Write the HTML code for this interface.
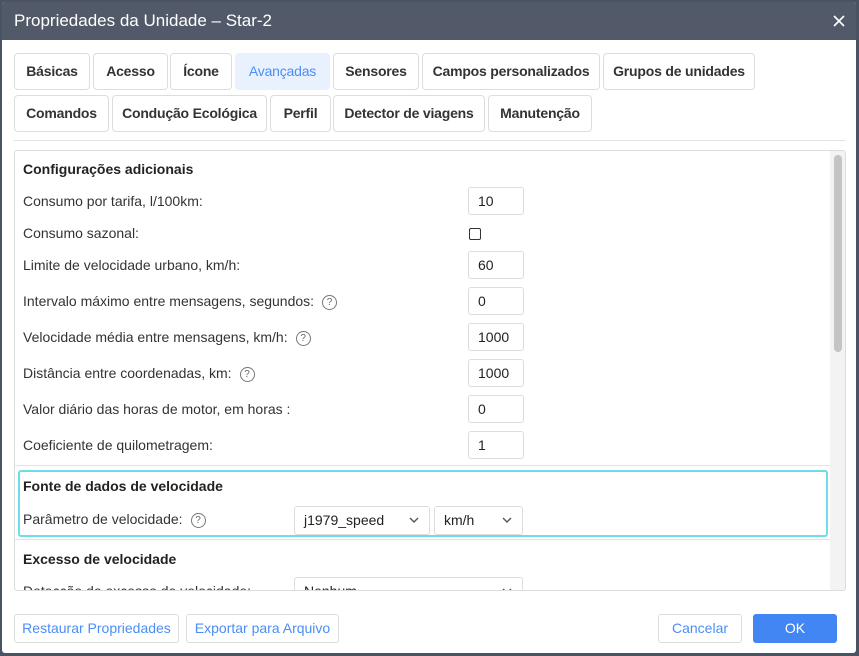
<!DOCTYPE html>
<html><head><meta charset="utf-8"><style>
*{box-sizing:border-box;margin:0;padding:0}
body{width:859px;height:656px;background:#4a5364;font-family:"Liberation Sans",sans-serif;position:relative;overflow:hidden;color:#222}
.win{position:absolute;left:2px;top:2px;width:854px;height:651px;background:#fff;border-radius:3px;overflow:hidden}
.title{position:absolute;left:0;top:0;width:100%;height:38px;background:#525a69;color:#fff;font-size:17px;line-height:38px;padding-left:12px}
.x{position:absolute;right:10px;top:12px;width:14px;height:14px}
.tab{position:absolute;height:37px;border:1px solid #ddd;border-radius:4px;font-size:14px;font-weight:bold;color:#333;line-height:35px;text-align:center;background:#fff;letter-spacing:-0.2px}
.tab.on{background:#e9f1fe;border-color:#e9f1fe;color:#4b8ef5;font-weight:normal}
.abs{position:absolute}
.lbl{position:absolute;left:8px;font-size:14px;color:#333}
.hd{position:absolute;left:8px;font-size:14px;font-weight:bold;color:#222}
.inp{position:absolute;left:453px;width:56px;height:28px;border:1px solid #ddd;border-radius:3px;font-size:14px;line-height:26px;padding-left:9px;color:#222}
.q{display:inline-block;width:15px;height:15px;border:1px solid #777;border-radius:50%;font-size:10px;line-height:13px;text-align:center;color:#666;margin-left:8px;vertical-align:1px}
.sel{position:absolute;height:29px;border:1px solid #ddd;border-radius:3px;font-size:14px;line-height:27px;padding-left:9px;color:#222;background:#fff}
.sel svg{position:absolute;right:10px;top:10px}
.btn{position:absolute;top:612px;height:29px;border:1px solid #ddd;border-radius:3px;font-size:14px;color:#4b8ef5;line-height:27px;text-align:center}
</style></head><body>
<div class="win">
<div class="title">Propriedades da Unidade – Star-2
<svg class="x" viewBox="0 0 14 14"><path d="M2 2L12 12M12 2L2 12" stroke="#fff" stroke-width="1.6"/></svg></div>
<div class="tab" style="left:12px;top:51px;width:76px">Básicas</div>
<div class="tab" style="left:91px;top:51px;width:75px">Acesso</div>
<div class="tab" style="left:168px;top:51px;width:62px">Ícone</div>
<div class="tab on" style="left:233px;top:51px;width:95px">Avançadas</div>
<div class="tab" style="left:331px;top:51px;width:86px">Sensores</div>
<div class="tab" style="left:420px;top:51px;width:178px">Campos personalizados</div>
<div class="tab" style="left:601px;top:51px;width:152px">Grupos de unidades</div>
<div class="tab" style="left:12px;top:93px;width:95px">Comandos</div>
<div class="tab" style="left:110px;top:93px;width:155px">Condução Ecológica</div>
<div class="tab" style="left:268px;top:93px;width:61px">Perfil</div>
<div class="tab" style="left:331px;top:93px;width:152px">Detector de viagens</div>
<div class="tab" style="left:486px;top:93px;width:104px">Manutenção</div>
<div class="abs" style="left:12px;top:138px;width:832px;height:1px;background:#e3e3e3"></div>
<div class="abs" style="left:12px;top:148px;width:832px;height:441px;border:1px solid #ddd;border-radius:3px;overflow:hidden">
 <div class="abs" style="right:0;top:0;width:15px;height:100%;background:#f3f3f3"></div>
 <div class="abs" style="right:3px;top:4px;width:8px;height:197px;background:#c4c4c4;border-radius:4px"></div>
 <div class="hd" style="top:10px">Configurações adicionais</div>
 <div class="lbl" style="top:42px">Consumo por tarifa, l/100km:</div><div class="inp" style="top:36px">10</div>
 <div class="lbl" style="top:74px">Consumo sazonal:</div><div class="abs" style="left:454px;top:77px;width:12px;height:12px;border:1px solid #333;border-radius:2px"></div>
 <div class="lbl" style="top:106px">Limite de velocidade urbano, km/h:</div><div class="inp" style="top:100px">60</div>
 <div class="lbl" style="top:142px">Intervalo máximo entre mensagens, segundos:<span class="q">?</span></div><div class="inp" style="top:136px">0</div>
 <div class="lbl" style="top:178px">Velocidade média entre mensagens, km/h:<span class="q">?</span></div><div class="inp" style="top:172px">1000</div>
 <div class="lbl" style="top:214px">Distância entre coordenadas, km:<span class="q">?</span></div><div class="inp" style="top:208px">1000</div>
 <div class="lbl" style="top:250px">Valor diário das horas de motor, em horas :</div><div class="inp" style="top:244px">0</div>
 <div class="lbl" style="top:286px">Coeficiente de quilometragem:</div><div class="inp" style="top:280px">1</div>
 <div class="abs" style="left:0;top:314px;width:815px;height:1px;background:#e3e3e3"></div>
 <div class="abs" style="left:3px;top:319px;width:810px;height:67px;border:2px solid #6edcea;border-radius:3px"></div>
 <div class="hd" style="top:327px">Fonte de dados de velocidade</div>
 <div class="lbl" style="top:360px">Parâmetro de velocidade:<span class="q">?</span></div>
 <div class="sel" style="left:279px;top:355px;width:136px">j1979_speed<svg width="10" height="6"><path d="M1 1L5 5L9 1" stroke="#555" fill="none" stroke-width="1.4"/></svg></div>
 <div class="sel" style="left:419px;top:355px;width:89px">km/h<svg width="10" height="6"><path d="M1 1L5 5L9 1" stroke="#555" fill="none" stroke-width="1.4"/></svg></div>
 <div class="abs" style="left:0;top:388px;width:815px;height:1px;background:#e3e3e3"></div>
 <div class="hd" style="top:400px">Excesso de velocidade</div>
 <div class="lbl" style="top:432px">Detecção de excesso de velocidade:</div>
 <div class="sel" style="left:279px;top:426px;width:229px">Nenhum<svg width="10" height="6"><path d="M1 1L5 5L9 1" stroke="#555" fill="none" stroke-width="1.4"/></svg></div>
</div>
<div class="btn" style="left:12px;width:165px">Restaurar Propriedades</div>
<div class="btn" style="left:184px;width:153px">Exportar para Arquivo</div>
<div class="btn" style="left:656px;width:84px">Cancelar</div>
<div class="btn" style="left:751px;width:84px;background:#4286f4;border-color:#4286f4;color:#fff">OK</div>
</div>
</body></html>
